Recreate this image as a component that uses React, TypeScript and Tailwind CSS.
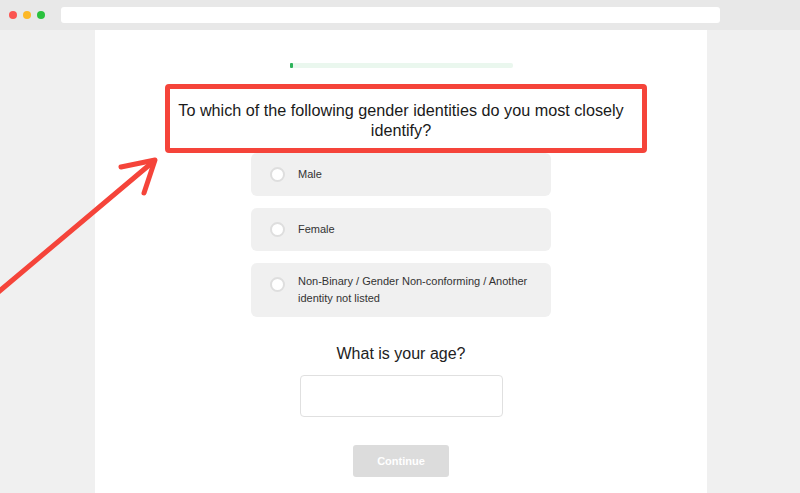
import React from "react";

function Radio({ className = "" }: { className?: string }) {
  return <div className={`w-[15px] h-[15px] rounded-full border-2 border-[#dedede] bg-white shrink-0 ${className}`} />;
}

function Option({ label, tall }: { label: React.ReactNode; tall?: boolean }) {
  return (
    <div
      className={`w-[300px] ${tall ? "h-[54px] items-start pt-[10px]" : "h-[43px] items-center"} bg-[#f0f0f0] rounded-[6px] flex pl-[19px] pr-[16px]`}
    >
      <Radio className={tall ? "mt-[4px]" : ""} />
      <div className="ml-[13px] text-[11px] leading-[17px] text-[#333]">{label}</div>
    </div>
  );
}

export default function App() {
  return (
    <div
      className="relative w-[800px] h-[493px] bg-[#f0f0f0] flex flex-col overflow-hidden"
      style={{ fontFamily: '"Liberation Sans", Arial, sans-serif' }}
    >
      {/* browser chrome */}
      <div className="h-[30px] bg-[#e8e8e8] flex items-center shrink-0">
        <div className="flex items-center gap-[6px] pl-[9px]">
          <div className="w-[8px] h-[8px] rounded-full bg-[#fb5451]" />
          <div className="w-[8px] h-[8px] rounded-full bg-[#fcb827]" />
          <div className="w-[8px] h-[8px] rounded-full bg-[#2ac13e]" />
        </div>
        <div className="ml-[16px] w-[659px] h-[16px] bg-white rounded-[3px]" />
      </div>

      {/* page */}
      <div className="flex-1 flex">
        <div className="ml-[95px] w-[612px] bg-white flex flex-col items-center pt-[33px]">
          <div className="w-[223px] h-[5px] bg-[#eaf7ee] rounded-[2px] flex">
            <div className="w-[3px] h-[5px] bg-[#2db35a] rounded-[1px]" />
          </div>

          <div className="mt-[16px] ml-[10px] w-[482px] h-[69px] border-[5px] border-[#f5443a] rounded-[4px] flex items-center justify-center pr-[10px]">
            <div className="text-[16.2px] leading-[20px] text-[#1a1a1a] text-center pt-[3px]">
              To which of the following gender identities do you most closely
              <br />
              identify?
            </div>
          </div>

          <div className="flex flex-col gap-[12px]">
            <Option label="Male" />
            <Option label="Female" />
            <Option
              tall
              label={
                <>
                  Non-Binary / Gender Non-conforming / Another
                  <br />
                  identity not listed
                </>
              }
            />
          </div>

          <div className="mt-[27px] text-[16px] leading-[20px] text-[#222]">What is your age?</div>

          <div className="mt-[11px] w-[203px] h-[42px] border border-[#e0e0e0] rounded-[4px] bg-white" />

          <div className="mt-[28px] w-[96px] h-[32px] bg-[#dcdcdc] rounded-[3px] flex items-center justify-center text-white font-bold text-[11px]">
            Continue
          </div>
        </div>
      </div>

      {/* annotation arrow */}
      <svg className="absolute left-0 top-0 pointer-events-none" width="800" height="493" viewBox="0 0 800 493">
        <g stroke="#f5443a" strokeWidth="5" strokeLinecap="round" strokeLinejoin="round" fill="none">
          <line x1="-4" y1="294" x2="154" y2="161" />
          <polyline points="121,167 155,160 144,193" />
        </g>
      </svg>
    </div>
  );
}
